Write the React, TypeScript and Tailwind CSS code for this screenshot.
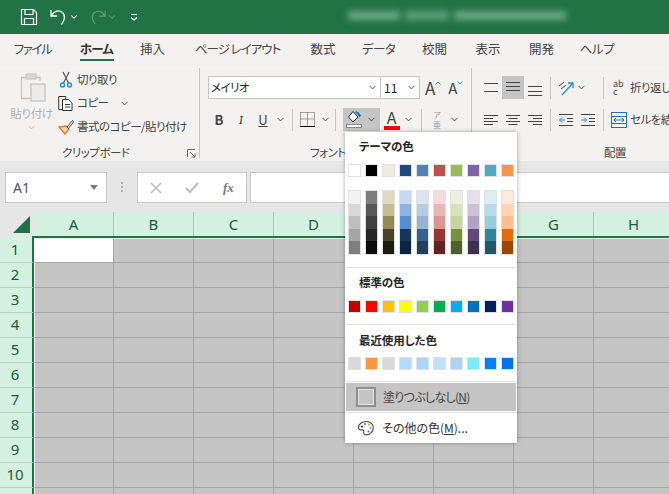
import { ReactNode } from "react";
import { ChevronDown } from "lucide-react";

const tabs = [
  { label: "ファイル", w: "w-[65px]", t: "tracking-[-1.4px]" },
  { label: "ホーム", w: "w-[63px]", t: "tracking-[-0.8px]", active: true },
  { label: "挿入", w: "w-[49px]", t: "" },
  { label: "ページ レイアウト", w: "w-[121px]", t: "tracking-[-1px]" },
  { label: "数式", w: "w-[50px]", t: "" },
  { label: "データ", w: "w-[61px]", t: "tracking-[-0.6px]" },
  { label: "校閲", w: "w-[51px]", t: "" },
  { label: "表示", w: "w-[56px]", t: "" },
  { label: "開発", w: "w-[51px]", t: "" },
  { label: "ヘルプ", w: "w-[60px]", t: "tracking-[-0.3px]" },
];

const themeBase = ["#ffffff", "#000000", "#eeece1", "#1f497d", "#4f81bd", "#c0504d", "#9bbb59", "#8064a2", "#4bacc6", "#f79646"];
const themeShades = [
  ["#f2f2f2", "#d8d8d8", "#bfbfbf", "#a5a5a5", "#7f7f7f"],
  ["#7f7f7f", "#595959", "#3f3f3f", "#262626", "#0c0c0c"],
  ["#ddd9c3", "#c4bd97", "#938953", "#494429", "#1d1b10"],
  ["#c6d9f0", "#8db3e2", "#548dd4", "#17365d", "#0f243e"],
  ["#dbe5f1", "#b8cce4", "#95b3d7", "#366092", "#244061"],
  ["#f2dcdb", "#e5b9b7", "#d99694", "#953734", "#632423"],
  ["#ebf1dd", "#d7e3bc", "#c3d69b", "#76923c", "#4f6128"],
  ["#e5e0ec", "#ccc1d9", "#b2a2c7", "#5f497a", "#3f3151"],
  ["#dbeef3", "#b7dde8", "#92cddc", "#31859b", "#205867"],
  ["#fdeada", "#fbd5b5", "#fac08f", "#e36c09", "#974806"],
];
const standard = ["#c00000", "#ff0000", "#ffc000", "#ffff00", "#92d050", "#00b050", "#00b0f0", "#0070c0", "#002060", "#7030a0"];
const recent = ["#d9d9d9", "#f79646", "#d9d9d7", "#b3dafa", "#a9d5f7", "#c2e0f8", "#add3f7", "#7eecf8", "#0080ff", "#0072ec"];

const columns = ["A", "B", "C", "D", "E", "F", "G", "H"];
const rows = [1, 2, 3, 4, 5, 6, 7, 8, 9, 10, 11];

function Chevron({ className = "" }: { className?: string }) {
  return <ChevronDown className={`h-[11px] w-[11px] shrink-0 text-[#444] ${className}`} strokeWidth={2} />;
}

function SwatchRow({ colors }: { colors: string[] }) {
  return (
    <div className="flex gap-[4px] pl-[3px]">
      {colors.map((c, i) => (
        <div key={i} className="h-[13px] w-[13px] border border-[#e1e1e1]" style={{ backgroundColor: c }} />
      ))}
    </div>
  );
}

function MenuTitle({ children, h }: { children: ReactNode; h: string }) {
  return <div className={`flex items-center pl-[14px] text-[11.5px] font-bold tracking-[-0.1px] text-[#262626] ${h}`}>{children}</div>;
}

function VSep({ className = "" }: { className?: string }) {
  return <div className={`h-[22px] w-px shrink-0 bg-[#c8c6c4] ${className}`} />;
}

function AlignIcon({ lines }: { lines: string[] }) {
  return (
    <svg width="16" height="16" viewBox="0 0 16 16" stroke="#444" strokeWidth="1" fill="none" className="shrink-0">
      {lines.map((d, i) => (
        <path key={i} d={d} />
      ))}
    </svg>
  );
}

function ColorPaletteMenu() {
  return (
    <div className="absolute left-[345px] top-[132px] flex h-[311px] w-[172px] flex-col bg-white shadow-[0_0_4px_rgba(0,0,0,0.35)]">
      <MenuTitle h="h-[30px]">テーマの色</MenuTitle>
      <div className="mt-[2px]">
        <SwatchRow colors={themeBase} />
      </div>
      <div className="mt-[13px] flex gap-[4px] pl-[3px]">
        {themeShades.map((col, i) => (
          <div key={i} className="flex h-[65px] w-[13px] flex-col border border-[#e1e1e1]">
            {col.map((c) => (
              <div key={c} className="flex-1" style={{ backgroundColor: c }} />
            ))}
          </div>
        ))}
      </div>
      <div className="mx-[1px] mt-[12px] h-px bg-[#e1dfdd]" />
      <MenuTitle h="h-[32px] pb-[2px]">標準の色</MenuTitle>
      <SwatchRow colors={standard} />
      <div className="mx-[1px] mt-[11px] h-px bg-[#e1dfdd]" />
      <MenuTitle h="h-[32px]">最近使用した色</MenuTitle>
      <SwatchRow colors={recent} />
      <div className="mx-[1px] mt-[11px] h-px bg-[#e1dfdd]" />
      <div className="mx-[1px] mt-[1px] flex h-[28px] items-center bg-[#c5c5c5] pl-[10px] text-[12px] text-[#444]">
        <div className="h-[20px] w-[20px] border-2 border-[#8f8f8f] bg-[#c5c5c5] shadow-[inset_0_0_0_1px_#e0e0e0]" />
        <span className="ml-[7px] tracking-[-0.7px]">
          塗りつぶしなし(<span className="underline">N</span>)
        </span>
      </div>
      <div className="mx-[1px] mt-px h-px bg-[#e1dfdd]" />
      <div className="flex flex-1 items-center pl-[12px] text-[12px] text-[#333]">
        <svg width="18" height="18" viewBox="0 0 18 18" className="shrink-0">
          <path d="M9 2.500c-4 0-7.500 2.600-7.500 6 0 2 1.600 2.600 3 2.400 1.600-.2 2.600.5 2.200 2-.4 1.600.6 3 2.600 3 4 0 7-3.400 7-7.200S13 2.500 9 2.500z" fill="#fff" stroke="#444" strokeWidth="1.100" />
          <circle cx="5" cy="7.500" r="1.100" fill="#444" />
          <circle cx="8" cy="5" r="1.100" fill="#d1456a" />
          <circle cx="12" cy="5.500" r="1.100" fill="#f79646" />
          <circle cx="13.500" cy="9" r="1.100" fill="#4f9fd8" />
          <circle cx="11.500" cy="12.500" r="1.100" fill="#8064a2" />
        </svg>
        <span className="ml-[7px]">
          その他の色(<span className="underline">M</span>)...
        </span>
      </div>
    </div>
  );
}

function GroupLabel({ children, className = "" }: { children: ReactNode; className?: string }) {
  return <div className={`flex h-[16px] shrink-0 items-center whitespace-nowrap text-[11.5px] tracking-[-0.5px] text-[#444] ${className}`}>{children}</div>;
}

function ClipboardGroup() {
  return (
    <div className="flex h-[90px] w-[200px] shrink-0 flex-col border-r border-[#c8c6c4]">
      <div className="flex h-[77px] shrink-0 pl-[10px] pt-[4px]">
        <div className="flex w-[43px] flex-col items-center">
          <svg width="28" height="30" viewBox="0 0 28 30" fill="none" stroke="#c3c3c3" className="shrink-0">
            <path d="M4 5.500h5V3h8v2.500h5V9" strokeWidth="1.300" />
            <path d="M4 5.500h-.5v21H12" strokeWidth="1.300" />
            <rect x="8" y="2" width="10" height="5" fill="#d8d8d8" />
            <rect x="13" y="12" width="14" height="17" fill="#ececec" strokeWidth="1.300" />
          </svg>
          <span className="mt-[3px] whitespace-nowrap text-[11.5px] leading-[16px] tracking-[-0.3px] text-[#b1b1b1]">貼り付け</span>
          <Chevron className="mt-[1px] opacity-30" />
        </div>
        <div className="-mt-[4px] ml-[5px] flex flex-col text-[11.5px] tracking-[-0.5px] text-[#444]">
          <div className="flex h-[23px] items-center">
            <svg width="16" height="18" viewBox="0 0 16 18" fill="none" className="shrink-0">
              <path d="M5 1l5.500 11M11 1L5.500 12" stroke="#555" strokeWidth="1.200" />
              <circle cx="4.500" cy="14" r="2" stroke="#2b88d8" strokeWidth="1.400" />
              <circle cx="11.500" cy="14" r="2" stroke="#2b88d8" strokeWidth="1.400" />
            </svg>
            <span className="ml-[3px]">切り取り</span>
          </div>
          <div className="flex h-[24px] items-center">
            <svg width="16" height="17" viewBox="0 0 16 17" fill="none" stroke="#333" className="shrink-0">
              <path d="M4 14.500H.7V1.500h7V4" />
              <path d="M4.500 4.500h6l3.500 3.500v7.500H4.500z" fill="#fff" />
              <path d="M7 9.500h5M7 12h5" />
            </svg>
            <span className="ml-[3px]">コピー</span>
            <Chevron className="ml-[11px]" />
          </div>
          <div className="flex h-[23px] items-center">
            <svg width="16" height="16" viewBox="0 0 16 16" fill="none" className="shrink-0">
              <path d="M1 8l6 7 4-5-3-3z" fill="#fcd9b0" stroke="#e8761c" strokeWidth="1.300" />
              <path d="M9 8l5.500-6.500L15.500 3 10.500 9.500z" fill="#fff" stroke="#444" strokeWidth="1" />
            </svg>
            <span className="ml-[3px] whitespace-nowrap">書式のコピー/貼り付け</span>
          </div>
        </div>
      </div>
      <GroupLabel className="pl-[62px]">
        クリップボード
        <svg width="9" height="9" viewBox="0 0 9 9" fill="none" stroke="#666" className="ml-auto mr-[3px]">
          <path d="M.5 8V.5H8M3 3l5 5M8 4.500V8H4.500" />
        </svg>
      </GroupLabel>
    </div>
  );
}

function FontGroup() {
  return (
    <div className="flex h-[90px] w-[272px] shrink-0 flex-col border-r border-[#c8c6c4]">
      <div className="h-[77px] shrink-0 pt-[8px]">
        <div className="flex h-[23px] items-stretch pl-[8px]">
          <div className="flex w-[173px] items-center border border-[#c6c6c6] bg-white pl-[2px] pr-[2px] text-[11.5px] tracking-[-0.6px] text-[#222]">
            メイリオ
            <Chevron className="ml-auto" />
          </div>
          <div className="flex w-[39px] items-center border border-l-0 border-[#c6c6c6] bg-white pl-[3px] pr-[2px] text-[12px] text-[#222]">
            11
            <Chevron className="ml-auto" />
          </div>
          <div className="ml-[5px] flex items-center text-[17px] leading-none text-[#444]">
            A
            <svg width="6" height="4" viewBox="0 0 6 4" fill="none" stroke="#2b88d8" className="-mt-[10px]">
              <path d="M.5 3.500L3 1l2.500 2.500" />
            </svg>
          </div>
          <div className="ml-[7px] flex items-center text-[15px] leading-none text-[#444]">
            A
            <svg width="6" height="4" viewBox="0 0 6 4" fill="none" stroke="#2b88d8" className="-mt-[10px]">
              <path d="M.5.500l2.500 2.500 2.500-2.500" />
            </svg>
          </div>
        </div>
        <div className="mt-[9px] flex h-[23px] items-center">
          <span className="ml-[14px] w-[10px] text-center text-[13px] font-bold text-[#444]">B</span>
          <span className="ml-[12px] w-[10px] text-center font-serif text-[13px] italic text-[#444]">I</span>
          <span className="ml-[12px] w-[10px] text-center text-[13px] text-[#444] underline">U</span>
          <Chevron className="ml-[7px]" />
          <VSep className="ml-[6px]" />
          <svg width="15" height="15" viewBox="0 0 15 15" fill="none" className="ml-[7px] shrink-0">
            <path d="M.5 .5h14M.5 .5v13M14.500 .5v13M7.500 .5v13M.5 7h14" stroke="#555" strokeDasharray="1 1" />
            <path d="M0 14.500h15" stroke="#000" />
          </svg>
          <Chevron className="ml-[5px]" />
          <VSep className="ml-[4px]" />
          <div className="ml-[7px] flex h-[23px] w-[37px] items-center bg-[#c5c5c5] pl-[3px]">
            <svg width="17" height="19" viewBox="0 0 17 19" fill="none" className="shrink-0">
              <path d="M7 1.500L2.500 7 7 12l5-5z" fill="#fff" stroke="#222" />
              <path d="M9.500 2c2 .3 3.400 1.500 3.800 3.500" stroke="#0f6cbd" strokeWidth="1.500" />
              <path d="M12 4.500l1.500 3 1.800-2.600z" fill="#0f6cbd" />
              <rect x=".5" y="14.500" width="15" height="3" fill="#fff" stroke="#8a8a8a" />
            </svg>
            <Chevron className="ml-[3px]" />
          </div>
          <div className="ml-[3px] flex h-[23px] w-[17px] shrink-0 flex-col items-center">
            <span className="text-[16px] leading-[18px] text-[#444]">A</span>
            <div className="h-[4px] w-[16px] bg-[#ff0000]" />
          </div>
          <Chevron className="ml-[3px]" />
          <VSep className="ml-[7px]" />
          <div className="ml-[10px] flex w-[10px] shrink-0 flex-col items-center text-[8px] leading-[10px] text-[#999]">
            <span>ア</span>
            <span>亜</span>
          </div>
          <Chevron className="ml-[7px]" />
        </div>
      </div>
      <GroupLabel className="pl-[110px]">フォント</GroupLabel>
    </div>
  );
}

function AlignmentGroup() {
  return (
    <div className="flex h-[90px] grow flex-col">
      <div className="h-[77px] shrink-0 pt-[8px]">
        <div className="flex h-[23px] items-center pl-[11px]">
          <AlignIcon lines={["M1 3.500h14", "M1 11.500h14"]} />
          <div className="ml-[3px] flex h-[23px] w-[22px] items-center justify-center bg-[#c5c5c5]">
            <AlignIcon lines={["M1 2.500h14", "M1 6.500h14", "M1 10.500h14"]} />
          </div>
          <div className="ml-[3px]">
            <AlignIcon lines={["M1 6.500h14", "M1 11.500h14", "M1 15.500h14"]} />
          </div>
          <VSep className="ml-[7px]" />
          <svg width="16" height="16" viewBox="0 0 16 16" fill="none" className="ml-[7px] shrink-0">
            <path d="M1 6l5-4M3 9l5-4" stroke="#444" />
            <path d="M4 15L15 3M10 3h5v5" stroke="#2b88d8" strokeWidth="1.300" />
          </svg>
          <Chevron className="ml-[2px]" />
          <VSep className="ml-[16px]" />
          <div className="ml-[9px] flex items-center whitespace-nowrap text-[11.5px] tracking-[-0.5px] text-[#444]">
            <span className="w-[16px] whitespace-normal text-[9px] leading-[8px] tracking-normal">ab c</span>
            <span className="ml-[1px]">折り返し</span>
          </div>
        </div>
        <div className="mt-[9px] flex h-[23px] items-center pl-[11px]">
          <AlignIcon lines={["M1 3.500h14", "M1 6.500h9", "M1 9.500h14", "M1 12.500h9"]} />
          <div className="ml-[6px]">
            <AlignIcon lines={["M1 3.500h14", "M3.500 6.500h9", "M1 9.500h14", "M3.500 12.500h9"]} />
          </div>
          <div className="ml-[6px]">
            <AlignIcon lines={["M1 3.500h14", "M6 6.500h9", "M1 9.500h14", "M6 12.500h9"]} />
          </div>
          <VSep className="ml-[7px]" />
          <svg width="16" height="16" viewBox="0 0 16 16" fill="none" className="ml-[7px] shrink-0">
            <path d="M1 2.500h14M9 6.500h6M9 9.500h6M1 13.500h14" stroke="#444" />
            <path d="M7 8H1.500M4 5.500L1.500 8 4 10.500" stroke="#2b88d8" />
          </svg>
          <svg width="16" height="16" viewBox="0 0 16 16" fill="none" className="ml-[6px] shrink-0">
            <path d="M1 2.500h14M9 6.500h6M9 9.500h6M1 13.500h14" stroke="#444" />
            <path d="M1 8h5.500M4 5.500L6.500 8 4 10.500" stroke="#2b88d8" />
          </svg>
          <VSep className="ml-[7px]" />
          <svg width="16" height="16" viewBox="0 0 16 16" fill="none" className="ml-[7px] shrink-0">
            <rect x=".5" y=".5" width="15" height="15" fill="#fff" stroke="#1f6fb2" />
            <path d="M.5 4.500h15M.5 11.500h15" stroke="#1f6fb2" />
            <path d="M3 8h10M5 6L3 8l2 2M11 6l2 2-2 2" stroke="#1f6fb2" />
          </svg>
          <span className="ml-[3px] whitespace-nowrap text-[11.5px] tracking-[-0.5px] text-[#444]">セルを結</span>
        </div>
      </div>
      <GroupLabel className="pl-[132px]">配置</GroupLabel>
    </div>
  );
}

function Sheet() {
  return (
    <div className="grid grid-cols-[34px_repeat(8,80px)] font-['Noto_Sans',sans-serif]">
      <div className="flex h-[24px] items-center justify-end bg-[#e6e6e6] pr-[4px]">
        <svg width="17" height="17" viewBox="0 0 17 17" className="shrink-0">
          <path d="M17 0v17H0z" fill="#217346" />
        </svg>
      </div>
      {columns.map((c) => (
        <div key={c} className="flex h-[24px] items-center justify-center border-r border-[#a9c4b5] bg-[#d3f0e0] text-[15px] text-[#1d5c3a]">
          {c}
        </div>
      ))}
      <div className="flex h-[2px] justify-end bg-[#d3f0e0]">
        <div className="w-[2px] bg-[#217346]" />
      </div>
      <div className="col-span-8 h-[2px] bg-[#217346]" />
      {rows.map((r) => (
        <div key={r} className="contents">
          <div className="flex h-[25px] items-center justify-center border-b border-r-2 border-b-[#bcd4c6] border-r-[#217346] bg-[#d3f0e0] pb-[2px] pr-[2px] text-[15px] text-[#1d5c3a]">
            {r}
          </div>
          {columns.map((c, i) => (
            <div
              key={c}
              className={`h-[25px] border-b border-r border-[#a6a6a6] ${r === 1 && i === 0 ? "bg-white" : "bg-[#c5c5c5]"} ${r === 1 ? "border-t border-t-[#e8e8e8]" : ""} ${i === 0 ? "border-l border-l-white" : ""}`}
            />
          ))}
        </div>
      ))}
    </div>
  );
}

export default function App() {
  return (
    <div className="relative h-[494px] w-[669px] overflow-hidden bg-[#e6e6e6] font-['Noto_Sans_CJK_JP',sans-serif] [font-feature-settings:'palt']">
      {/* タイトルバー */}
      <div className="flex h-[34px] items-center bg-[#217346] pl-[20px]">
        <svg width="18" height="18" viewBox="0 0 18 18" fill="none" stroke="#fff" strokeWidth="1.200" className="shrink-0">
          <path d="M1.500 1.500h12l3 3v12h-15z" />
          <path d="M5 1.500v5h8v-5M4.500 16.500v-6h9v6" />
        </svg>
        <svg width="18" height="18" viewBox="0 0 18 18" fill="none" stroke="#fff" strokeWidth="1.300" className="ml-[12px] shrink-0">
          <path d="M1 2v6h6M1.500 7.500C4 3 9 1.500 12.500 4.500c3 3 2.500 7-1 12" />
        </svg>
        <ChevronDown className="ml-[1px] h-[10px] w-[10px] text-white" strokeWidth={2.500} />
        <svg width="17" height="18" viewBox="0 0 18 18" fill="none" stroke="#5b9c79" strokeWidth="1.300" className="ml-[10px] shrink-0">
          <path d="M17 2v6h-6M16.500 7.500C14 3 9 1.500 5.500 4.500c-3 3-2.500 7 1 12" />
        </svg>
        <ChevronDown className="ml-[1px] h-[10px] w-[10px] text-[#5b9c79]" strokeWidth={2.500} />
        <svg width="8" height="8" viewBox="0 0 8 8" fill="none" stroke="#fff" className="ml-[13px] shrink-0">
          <path d="M1 1.500h6" />
          <path d="M1 4.500l3 2.500 3-2.500" strokeWidth="1.300" />
        </svg>
        <div className="-mt-[4px] ml-[210px] flex items-center gap-[5px] blur-[3px]">
          <div className="h-[9px] w-[52px] bg-[#6aa585]" />
          <div className="h-[9px] w-[44px] bg-[#5f9d7c]" />
          <div className="h-[9px] w-[112px] bg-[#6aa585]" />
        </div>
      </div>

      {/* タブ */}
      <div className="flex h-[31px] items-start bg-[#f3f2f1] pt-[6px] text-[12.5px] text-[#444]">
        {tabs.map((t) => (
          <div key={t.label} className={`flex flex-col items-center whitespace-nowrap ${t.w}`}>
            <span className={`leading-[18px] ${t.t} ${t.active ? "font-bold text-[#333]" : ""}`}>{t.label}</span>
            {t.active && <div className="mt-px h-[2px] w-[34px] bg-[#217346]" />}
          </div>
        ))}
      </div>

      {/* リボン */}
      <div className="flex h-[96px] bg-[#f3f2f1] py-[3px] shadow-[0_1px_2px_rgba(0,0,0,0.12)]">
        <ClipboardGroup />
        <FontGroup />
        <AlignmentGroup />
      </div>

      {/* 数式バー */}
      <div className="flex h-[51px] items-start bg-[#e6e6e6] pl-[5px] pt-[11px]">
        <div className="flex h-[31px] w-[102px] items-center border border-[#c6c6c6] bg-white pl-[7px] pr-[8px] font-['Noto_Sans',sans-serif] text-[14px] text-[#555]">
          A1
          <svg width="8" height="5" viewBox="0 0 8 5" className="ml-auto">
            <path d="M0 0h8L4 5z" fill="#777" />
          </svg>
        </div>
        <div className="ml-[14px] mt-[10px] flex flex-col gap-[2px]">
          <div className="h-[2px] w-[2px] bg-[#b0b0b0]" />
          <div className="h-[2px] w-[2px] bg-[#b0b0b0]" />
          <div className="h-[2px] w-[2px] bg-[#b0b0b0]" />
        </div>
        <div className="ml-[14px] flex h-[31px] w-[110px] items-center border border-[#c6c6c6] bg-white pl-[12px]">
          <svg width="12" height="12" viewBox="0 0 12 12" fill="none" stroke="#bdbdbd" strokeWidth="1.500" className="shrink-0">
            <path d="M1 1l10 10M11 1L1 11" />
          </svg>
          <svg width="14" height="12" viewBox="0 0 14 12" fill="none" stroke="#bdbdbd" strokeWidth="2" className="ml-[23px] shrink-0">
            <path d="M1 6l4 4 8-9" />
          </svg>
          <span className="ml-[24px] font-['Liberation_Serif',serif] text-[13px] font-bold italic text-[#777]">fx</span>
        </div>
        <div className="ml-[3px] h-[31px] grow border border-r-0 border-[#c6c6c6] bg-white" />
      </div>

      <Sheet />
      <ColorPaletteMenu />
    </div>
  );
}
